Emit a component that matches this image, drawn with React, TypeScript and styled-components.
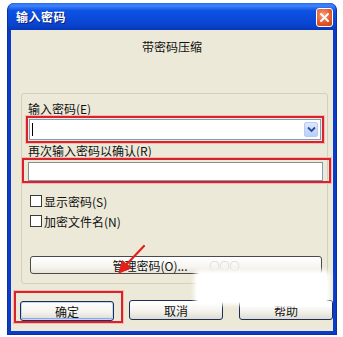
import React from "react";
import styled, { createGlobalStyle } from "styled-components";

const Global = createGlobalStyle`
  html, body { margin: 0; padding: 0; background: #ffffff; }
  body { width: 343px; height: 337px; overflow: hidden; font-family: "Noto Sans CJK SC", "Noto Sans", sans-serif; }
  * { box-sizing: border-box; }
`;

const Page = styled.div`
  position: relative;
  width: 343px;
  height: 337px;
  padding: 3px 0 0 7px;
`;

const Window = styled.div`
  width: 330px;
  height: 332px;
  display: flex;
  flex-direction: column;
  background: #0a3ccc;
  border-radius: 7px 7px 0 0;
  padding: 0 3px 3px 3px;
  border: 1px solid #08309f;
  border-top: none;
`;

const TitleBar = styled.div`
  height: 27px;
  margin: 0 -3px;
  padding: 0 3px 0 8px;
  display: flex;
  align-items: center;
  justify-content: space-between;
  border-radius: 7px 7px 0 0;
  background: linear-gradient(
    to bottom,
    #2b6cf0 0%,
    #3f85fb 10%,
    #0e52e4 28%,
    #0a4bd9 55%,
    #0944cf 80%,
    #0737b8 100%
  );
`;

const Title = styled.span`
  color: #ffffff;
  font-size: 12px;
  font-weight: 700;
  letter-spacing: 0.5px;
  text-shadow: 1px 1px 0 #0a1e7a;
`;

const CloseButton = styled.div`
  width: 17px;
  height: 19px;
  margin-top: 2px;
  border: 1px solid #ffffff;
  border-radius: 3px;
  background: radial-gradient(circle at 40% 35%, #f5a07a 0%, #e45a2c 55%, #c63c12 100%);
  display: flex;
  align-items: center;
  justify-content: center;
`;

const Content = styled.div`
  flex: 1;
  background: #ece9d8;
  display: flex;
  flex-direction: column;
`;

const Heading = styled.div`
  margin-top: 10px;
  height: 14px;
  line-height: 14px;
  text-align: center;
  font-size: 12px;
  color: #111;
`;

const Group = styled.div`
  margin: 39px 5px 0 10px;
  border: 1px solid #d3d0bf;
  border-radius: 3px;
  padding-bottom: 9px;
  display: flex;
  flex-direction: column;
`;

const Label = styled.div<{ $top: number }>`
  margin: ${(p) => p.$top}px 0 0 6px;
  height: 14px;
  line-height: 14px;
  font-size: 12px;
  color: #111;
  white-space: nowrap;
`;

const Highlight = styled.div<{ $left: number; $w: number; $h: number; $pad: string }>`
  margin-left: ${(p) => p.$left}px;
  width: ${(p) => p.$w}px;
  height: ${(p) => p.$h}px;
  border: 2px solid #d8232a;
  box-shadow: 0 0 0 1px #f3b8b8;
  padding: ${(p) => p.$pad};
  display: flex;
`;

const Combo = styled.div`
  flex: 1;
  background: #ffffff;
  border: 1px solid #7f9db9;
  display: flex;
  align-items: center;
  justify-content: space-between;
  padding: 0 2px 0 2px;
`;

const Caret = styled.div`
  width: 1px;
  height: 13px;
  background: #000;
`;

const DropButton = styled.div`
  width: 14px;
  height: 15px;
  border-radius: 2px;
  background: linear-gradient(to bottom, #dce8ff 0%, #b9cefa 100%);
  border: 1px solid #b7caf5;
  display: flex;
  align-items: center;
  justify-content: center;
`;

const TextInput = styled.div`
  flex: 1;
  background: #ffffff;
  border: 1px solid #7f9db9;
  border-top-color: #8c8c8c;
  border-left-color: #8c8c8c;
`;

const CheckRow = styled.div<{ $top: number }>`
  margin: ${(p) => p.$top}px 0 0 8px;
  height: 14px;
  display: flex;
  align-items: center;
  gap: 2px;
  font-size: 12px;
  color: #111;
`;

const CheckBox = styled.div`
  width: 12px;
  height: 12px;
  border: 1px solid #3a3a3a;
  background: #ffffff;
`;

const ManageButton = styled.div`
  margin: 28px 0 0 8px;
  width: 292px;
  height: 18px;
  border: 1px solid #4a4a4a;
  border-radius: 3px;
  background: linear-gradient(to bottom, #ffffff 0%, #f6f5f0 60%, #e6e4da 100%);
  display: flex;
  align-items: center;
  justify-content: center;
  font-size: 12px;
  color: #111;
  gap: 4px;
`;

const Faint = styled.span`
  color: #c8c8c8;
  font-size: 10px;
  margin-left: 18px;
`;

const ButtonRow = styled.div`
  margin: 7px 0 0 3px;
  display: flex;
  align-items: flex-end;
`;

const DefaultFrame = styled.div`
  width: 109px;
  height: 32px;
  border: 2px solid #d8232a;
  box-shadow: 0 0 0 1px #f3b8b8;
  padding: 8px 7px 1px 4px;
  display: flex;
`;

const Button = styled.div<{ $left?: number; $default?: boolean }>`
  margin-left: ${(p) => p.$left ?? 0}px;
  margin-bottom: ${(p) => (p.$default ? 0 : 3)}px;
  width: ${(p) => (p.$default ? "100%" : "94px")};
  height: 20px;
  border: 1px solid #1e2c5a;
  border-radius: 3px;
  background: linear-gradient(to bottom, #ffffff 0%, #f4f3ee 55%, #dedcd0 100%);
  box-shadow: ${(p) => (p.$default ? "inset 0 0 0 1px #c2d6fb, inset 0 -1px 0 1px #8aa8ee" : "none")};
  display: flex;
  align-items: center;
  justify-content: center;
  font-size: 12px;
  color: #111;
  position: relative;
  overflow: hidden;
`;

const Blob = styled.div`
  position: absolute;
  left: 197px;
  top: 273px;
  width: 130px;
  height: 29px;
  background: #ffffff;
  border-radius: 4px;
  box-shadow: 0 0 4px 3px #ffffff;
`;

const TextCover = styled.div`
  position: absolute;
  left: 0;
  right: 0;
  top: 0;
  height: 7px;
  background: linear-gradient(to bottom, #ffffff 0%, #ffffff 70%, rgba(255,255,255,0) 100%);
`;

const Arrow = styled.svg`
  position: absolute;
  left: 112px;
  top: 244px;
`;

export default function App() {
  return (
    <>
      <Global />
      <Page>
        <Window>
          <TitleBar>
            <Title>输入密码</Title>
            <CloseButton>
              <svg width="11" height="11" viewBox="0 0 11 11">
                <path d="M2 2 L9 9 M9 2 L2 9" stroke="#ffffff" strokeWidth="2" strokeLinecap="round" />
              </svg>
            </CloseButton>
          </TitleBar>
          <Content>
            <Heading>带密码压缩</Heading>
            <Group>
              <Label $top={8}>输入密码(E)</Label>
              <Highlight $left={4} $w={298} $h={27} $pad="1px 1px 1px 1px">
                <Combo>
                  <Caret />
                  <DropButton>
                    <svg width="9" height="7" viewBox="0 0 9 7">
                      <path d="M1 1.5 L4.5 5 L8 1.5" stroke="#2c4a9a" strokeWidth="1.8" fill="none" />
                    </svg>
                  </DropButton>
                </Combo>
              </Highlight>
              <Label $top={1}>再次输入密码以确认(R)</Label>
              <Highlight $left={0} $w={309} $h={25} $pad="2px 6px 0 4px">
                <TextInput />
              </Highlight>
              <CheckRow $top={11}>
                <CheckBox />
                显示密码(S)
              </CheckRow>
              <CheckRow $top={6}>
                <CheckBox />
                加密文件名(N)
              </CheckRow>
              <ManageButton>
                管理密码(O)...<Faint>○○○</Faint>
              </ManageButton>
            </Group>
            <ButtonRow>
              <DefaultFrame>
                <Button $default>确定</Button>
              </DefaultFrame>
              <Button $left={6}>取消</Button>
              <Button $left={16}>
                帮助
                <TextCover />
              </Button>
            </ButtonRow>
          </Content>
        </Window>
        <Blob />
        <Arrow width="36" height="34" viewBox="0 0 36 34">
          <path d="M32 2 L14 21" stroke="#e3201b" strokeWidth="2.2" strokeLinecap="round" />
          <path d="M6 30 L10 16 L20 24 Z" fill="#e3201b" />
        </Arrow>
      </Page>
    </>
  );
}
